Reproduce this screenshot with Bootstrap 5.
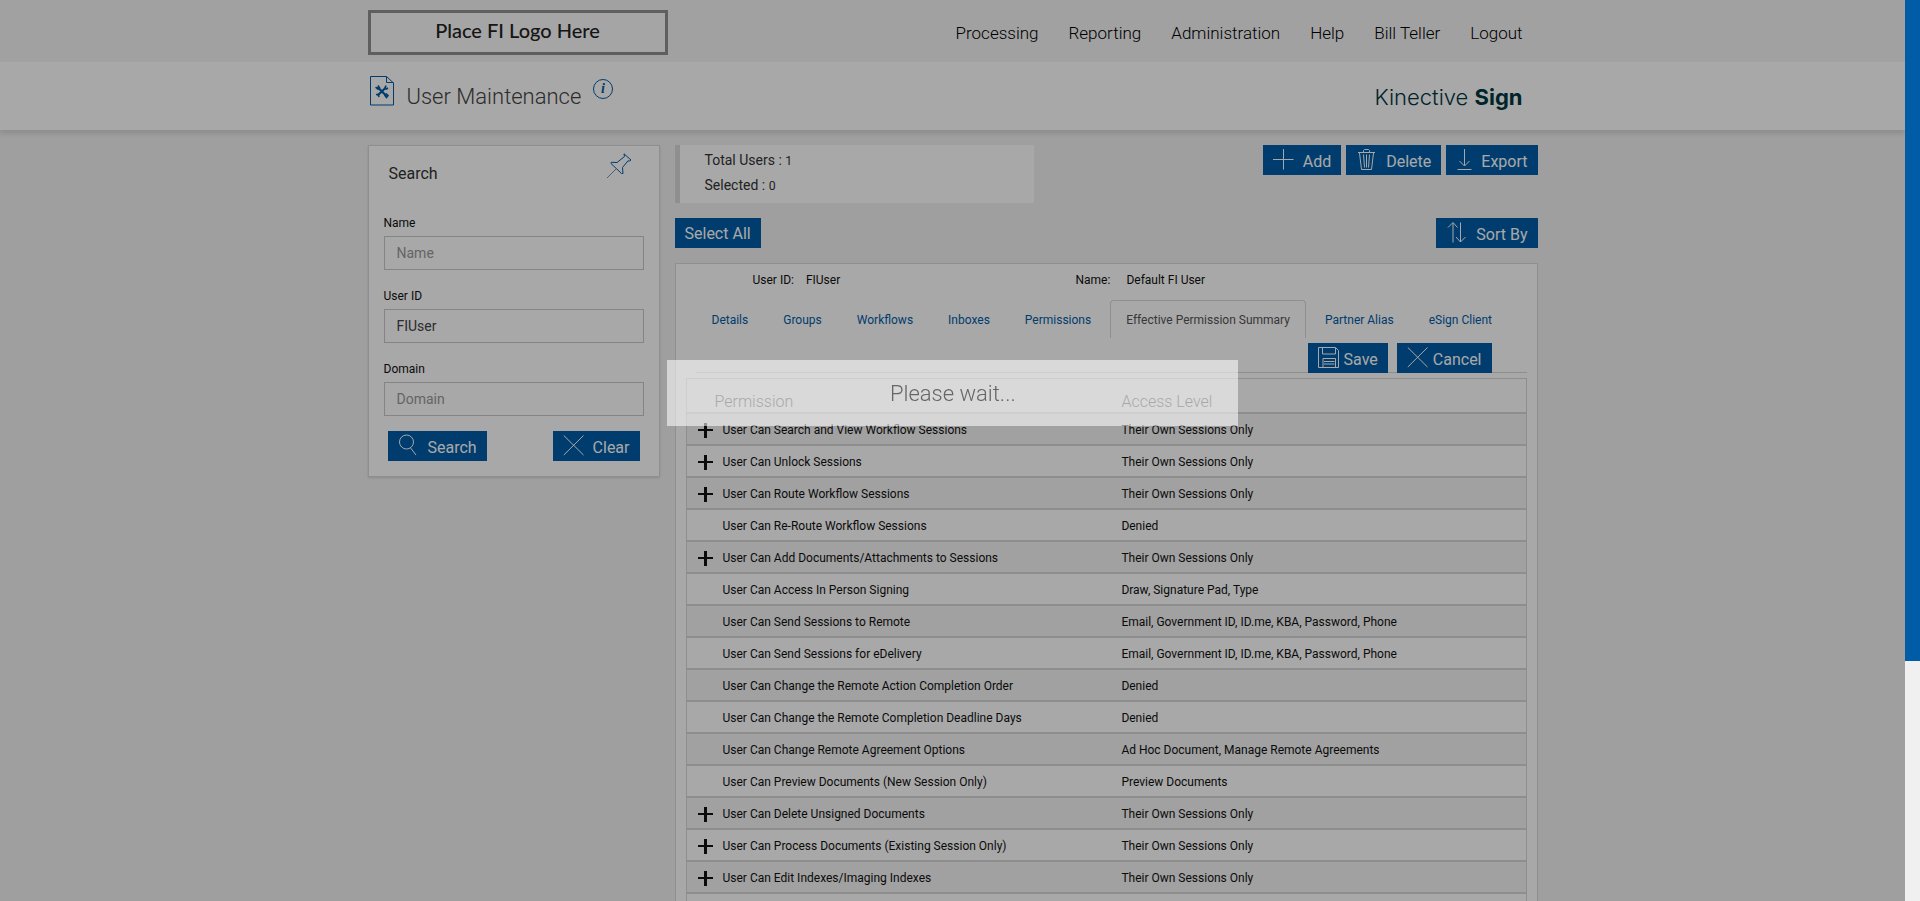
<!DOCTYPE html>
<html lang="en">
<head>
<meta charset="utf-8">
<meta name="viewport" content="width=device-width, initial-scale=1">
<title>User Maintenance</title>
<link href="https://cdn.jsdelivr.net/npm/bootstrap@5.3.0/dist/css/bootstrap.min.css" rel="stylesheet">
<style>
  html, body { height: 100%; overflow: hidden; }
  body { background: #f1f1f1; color: #111; font-family: Roboto, "Open Sans", sans-serif; font-size: 12px; line-height: 16px; padding-right: 15px; }
  a { text-decoration: none; }
  .page-wrap { max-width: 1170px; margin: 0 auto; }
  .top-bar { background: #f4f4f4; height: 62px; }
  .top-bar .page-wrap { padding-top: 10px; }
  .fi-logo { width: 300px; height: 45px; border: 3px solid #919191; background: #fbfbfb; font: 500 20px/34px Lato, sans-serif; color: #222; text-align: center; }
  .main-menu { gap: 30px; padding-right: 15px; }
  .main-menu a { color: #000; font-size: 17px; line-height: 24px; font-weight: 300; }
  .title-bar { background: #fff; height: 68px; box-shadow: 0 4px 4px rgba(0,0,0,.1); position: relative; }
  .title-bar .page-wrap { padding: 14px 0 0 2px; }
  .title-bar h1 { font-size: 22px; line-height: 28px; font-weight: 300; color: #444; padding: 7px 0 0 13px; }
  .brand { font: 300 22px/28px Inter, sans-serif; color: #003741; padding: 7px 15px 0 0; }
  .brand b { font-weight: 700; }
  main.page-wrap { padding-top: 15px; gap: 15px; }
  .search-col { width: 292px; }
  .panel { background: #fff; border: 1px solid #dadada; }
  .search-panel { padding: 0 15px 15px; box-shadow: 0 1px 2px rgba(0,0,0,.12); }
  .search-head { height: 69px; padding: 7px 12px 0 5px; }
  .search-head h2 { font-size: 16px; line-height: 20px; font-weight: 400; color: #333; padding-top: 11px; }
  .search-panel label { display: block; margin-bottom: 5px; color: #111; }
  .field { margin-bottom: 18px; }
  .field:nth-last-child(2) { margin-bottom: 15px; }
  .field .form-control { height: 34px; padding: 0 12px; border: 1px solid #c8c8c8; border-radius: 0; font-size: 14px; color: #444; }
  .field .form-control::placeholder { color: #999; }
  .act { height: 30px; border: 0; border-radius: 0; background: #005ca6; color: #fff; font-size: 16px; line-height: 20px; padding: 0 10px; display: inline-flex; align-items: flex-start; gap: 8px; }
  .act:hover { background: #005ca6; color: #fff; }
  .act svg { width: 22px; height: 22px; margin-top: 3px; fill: none; stroke: #fff; stroke-width: 1; flex: none; }
  .act svg.narrow { width: 17px; }
  .act span { padding-top: 7px; }
  .act.plain span { padding-top: 6px; }
  .stats { width: 359px; height: 58px; border-left: 5px solid #dadada; background: #fff; padding: 3px 25px; font-size: 14px; line-height: 24px; color: #333; }
  .stats p { margin: 0; }
  .tool-row { gap: 5px; }
  .pick-row { padding: 15px 0; }
  .user-row { padding: 8px 0 0 77px; height: 36px; }
  .user-row dl { margin: 0; }
  .user-row .uid { width: 323px; }
  .user-tabs { padding-left: 20px; gap: 3px; border: 0; }
  .user-tabs .nav-link { border: 1px solid transparent; border-bottom: 0; border-radius: 4px 4px 0 0; padding: 11px 15px; color: #005ca6; font-size: 12px; line-height: 16px; margin: 0; height: 38px; }
  .user-tabs .nav-link.active { border-color: #d8d8d8; color: #555; background: #fff; }
  .save-row { margin: 5px 10px 5px 20px; padding-right: 35px; gap: 9px; box-shadow: inset 0 -1px #d8d8d8; }
  .save-row .act { gap: 4px; }
  .perm-wrap { margin: 0 10px; }
  .perm { width: 100%; border: 1px solid #d8d8d8; border-collapse: separate; border-spacing: 0; table-layout: fixed; }
  .perm th { height: 33px; font-size: 16px; line-height: 20px; font-weight: 300; color: #555; padding: 0 7px; vertical-align: bottom; }
  .perm th:first-child { width: 51%; padding-left: 28px; }
  .perm td { height: 32px; border-top: 2px solid #d8d8d8; padding: 2px 7px 0; }
  .perm td:first-child { padding-left: 11px; }
  .perm tbody tr:nth-child(odd) { background: #f4f4f4; }
  .expander { display: inline-flex; width: 25px; vertical-align: middle; }
  .expander button { border: 0; background: none; padding: 0; display: flex; }
  .dimmer { position: fixed; inset: 0 15px 0 0; background: rgba(0,0,0,.34); z-index: 10; }
  .wait-box { position: fixed; z-index: 11; left: 34.75%; top: 40%; width: 29.75%; height: 66px; background: rgba(255,255,255,.56); font-size: 22px; font-weight: 300; line-height: 68px; color: #666; text-align: center; }
  .page-scroll { position: fixed; z-index: 12; right: 0; top: 0; bottom: 0; width: 15px; background: #f0f0f0; }
  .page-scroll div { height: 73.4%; background: #005ca6; }
</style>
</head>
<body>
<header>
  <div class="top-bar">
    <div class="page-wrap d-flex justify-content-between">
      <div class="fi-logo">Place FI Logo Here</div>
      <nav class="main-menu d-flex align-items-center">
        <a href="#">Processing</a><a href="#">Reporting</a><a href="#">Administration</a><a href="#">Help</a><a href="#">Bill Teller</a><a href="#">Logout</a>
      </nav>
    </div>
  </div>
  <div class="title-bar">
    <div class="page-wrap d-flex justify-content-between align-items-start">
      <div class="d-flex align-items-start">
        <svg width="24" height="30" viewBox="0 0 24 30" fill="none" stroke="#005ca6" stroke-width="1">
          <path d="M.5.5H16.500L23.500 7V29H.5Z"/><path d="M16.500.5V6.500H23.500"/>
          <path d="M7.500 11L16.500 20M16 11.500L7.500 19.500" stroke-width="2.200"/>
          <path d="M5.600 11.200L8 13.200L9.500 11.800L8 9.500M16 9.500L15 12L16.300 13L18 12M6 18.500L8.300 18.500L9 21M14.500 19L16.500 21.500L18 19.500L16 17.500" stroke-width="1.600"/>
        </svg>
        <h1 class="mb-0">User Maintenance</h1>
        <svg class="ms-2" width="26" height="24" viewBox="0 0 24 24"><circle cx="13" cy="13" r="9.500" fill="none" stroke="#005ca6"/><text x="13" y="17" text-anchor="middle" font-family="Liberation Serif, serif" font-style="italic" font-weight="700" font-size="14" fill="#005ca6">i</text></svg>
      </div>
      <div class="brand">Kinective <b>Sign</b></div>
    </div>
  </div>
</header>

<main class="page-wrap d-flex">
  <aside class="search-col flex-shrink-0">
    <form class="panel search-panel">
      <div class="search-head d-flex justify-content-between align-items-start">
        <h2 class="mb-0">Search</h2>
        <svg width="26" height="26" viewBox="0 0 26 26" fill="none" stroke="#005ca6"><path d="M18 .8L25 7L23.500 8L22 7.800L16.500 14.500L17 20.500L15.500 20.500L5 10.500L5.200 9.300L11 9.500L18.500 3.500Z"/><path d="M10.500 15.500L1 25" stroke="#7a8fa5"/></svg>
      </div>
      <div class="field"><label for="f-name">Name</label><input id="f-name" class="form-control" type="text" placeholder="Name"></div>
      <div class="field"><label for="f-user">User ID</label><input id="f-user" class="form-control" type="text" value="FIUser"></div>
      <div class="field"><label for="f-domain">Domain</label><input id="f-domain" class="form-control" type="text" placeholder="Domain"></div>
      <div class="d-flex justify-content-between px-1">
        <button type="button" class="btn act"><svg viewBox="0 0 22 22"><circle cx="8.500" cy="8" r="7"/><path d="M12.500 13.800L18 21"/></svg><span>Search</span></button>
        <button type="button" class="btn act"><svg viewBox="0 0 22 22"><path d="M.8 1.500L20.500 21M20.500 1.500L.8 21"/></svg><span>Clear</span></button>
      </div>
    </form>
  </aside>

  <section class="flex-grow-1">
    <div class="d-flex justify-content-between align-items-start">
      <div class="stats"><p>Total Users : <small>1</small></p><p>Selected : <small>0</small></p></div>
      <div class="tool-row d-flex">
        <button type="button" class="btn act"><svg viewBox="0 0 22 22"><path d="M10.500 1V21.500M0 11.500H20.500"/></svg><span>Add</span></button>
        <button type="button" class="btn act"><svg viewBox="0 0 22 22"><path d="M2 4.500H19M7.500 4V2.500L8.500 1.500H12.500L13.500 2.500V4M3.500 5L5.500 21.500H15.500L17.500 5M7.500 6.500L8.500 19.500M10.500 6.500V19.500M13.500 6.500L12.500 19.500"/></svg><span>Delete</span></button>
        <button type="button" class="btn act"><svg class="narrow" viewBox="2 0 17 22"><path d="M10.500 1V17.500M5.500 13L10.500 18L15.500 13M3.500 21.500H17.500"/></svg><span>Export</span></button>
      </div>
    </div>
    <div class="pick-row d-flex justify-content-between">
      <button type="button" class="btn act plain"><span>Select All</span></button>
      <button type="button" class="btn act"><svg viewBox="0 0 22 22"><path d="M7 21.500V2M2 6.500L7 1.500L11.500 6.500M14.500 1.500V21M10 16L14.500 21L19.500 16"/></svg><span>Sort By</span></button>
    </div>
    <div class="panel">
      <div class="user-row d-flex">
        <dl class="d-flex uid"><dt class="fw-normal me-2 pe-1">User ID:</dt><dd>FIUser</dd></dl>
        <dl class="d-flex"><dt class="fw-normal me-3">Name:</dt><dd>Default FI User</dd></dl>
      </div>
      <ul class="nav nav-tabs user-tabs">
        <li class="nav-item"><a class="nav-link" href="#">Details</a></li>
        <li class="nav-item"><a class="nav-link" href="#">Groups</a></li>
        <li class="nav-item"><a class="nav-link" href="#">Workflows</a></li>
        <li class="nav-item"><a class="nav-link" href="#">Inboxes</a></li>
        <li class="nav-item"><a class="nav-link" href="#">Permissions</a></li>
        <li class="nav-item"><a class="nav-link active" href="#">Effective Permission Summary</a></li>
        <li class="nav-item"><a class="nav-link" href="#">Partner Alias</a></li>
        <li class="nav-item"><a class="nav-link" href="#">eSign Client</a></li>
      </ul>
      <div class="save-row d-flex justify-content-end">
        <button type="button" class="btn act"><svg viewBox="0 0 22 22"><path d="M.5 1.500H17.500L20.500 4.500V21.500H.5ZM4.500 1.500V8H17.500V2M5 21V12.500H17.500V21M6 15.500H16.500M6 18H16.500"/></svg><span>Save</span></button>
        <button type="button" class="btn act"><svg viewBox="0 0 22 22"><path d="M.8 1.500L20.500 21M20.500 1.500L.8 21"/></svg><span>Cancel</span></button>
      </div>
      <div class="perm-wrap">
        <table class="perm">
          <thead><tr><th scope="col">Permission</th><th scope="col">Access Level</th></tr></thead>
          <tbody id="perm-rows"></tbody>
        </table>
      </div>
    </div>
  </section>
</main>

<div class="dimmer"></div>
<div class="wait-box" role="status">Please wait...</div>
<div class="page-scroll"><div></div></div>

<script src="https://cdn.jsdelivr.net/npm/bootstrap@5.3.0/dist/js/bootstrap.bundle.min.js"></script>
<script>
  // [expandable, permission, access level]
  const own = 'Their Own Sessions Only';
  const remote = 'Email, Government ID, ID.me, KBA, Password, Phone';
  const rows = [
    [1, 'User Can Search and View Workflow Sessions', own],
    [1, 'User Can Unlock Sessions', own],
    [1, 'User Can Route Workflow Sessions', own],
    [0, 'User Can Re-Route Workflow Sessions', 'Denied'],
    [1, 'User Can Add Documents/Attachments to Sessions', own],
    [0, 'User Can Access In Person Signing', 'Draw, Signature Pad, Type'],
    [0, 'User Can Send Sessions to Remote', remote],
    [0, 'User Can Send Sessions for eDelivery', remote],
    [0, 'User Can Change the Remote Action Completion Order', 'Denied'],
    [0, 'User Can Change the Remote Completion Deadline Days', 'Denied'],
    [0, 'User Can Change Remote Agreement Options', 'Ad Hoc Document, Manage Remote Agreements'],
    [0, 'User Can Preview Documents (New Session Only)', 'Preview Documents'],
    [1, 'User Can Delete Unsigned Documents', own],
    [1, 'User Can Process Documents (Existing Session Only)', own],
    [1, 'User Can Edit Indexes/Imaging Indexes', own],
    [0, '', '']
  ];
  const plus = '<button type="button" aria-label="Expand"><svg width="15" height="15" viewBox="0 0 15 15"><path d="M6 0h3v15H6zM0 6h15v2H0z" fill="#111"/></svg></button>';
  document.getElementById('perm-rows').innerHTML = rows.map(([open, name, level]) =>
    `<tr><td><span class="expander">${open ? plus : ''}</span>${name}</td><td>${level}</td></tr>`).join('');
</script>
</body>
</html>
